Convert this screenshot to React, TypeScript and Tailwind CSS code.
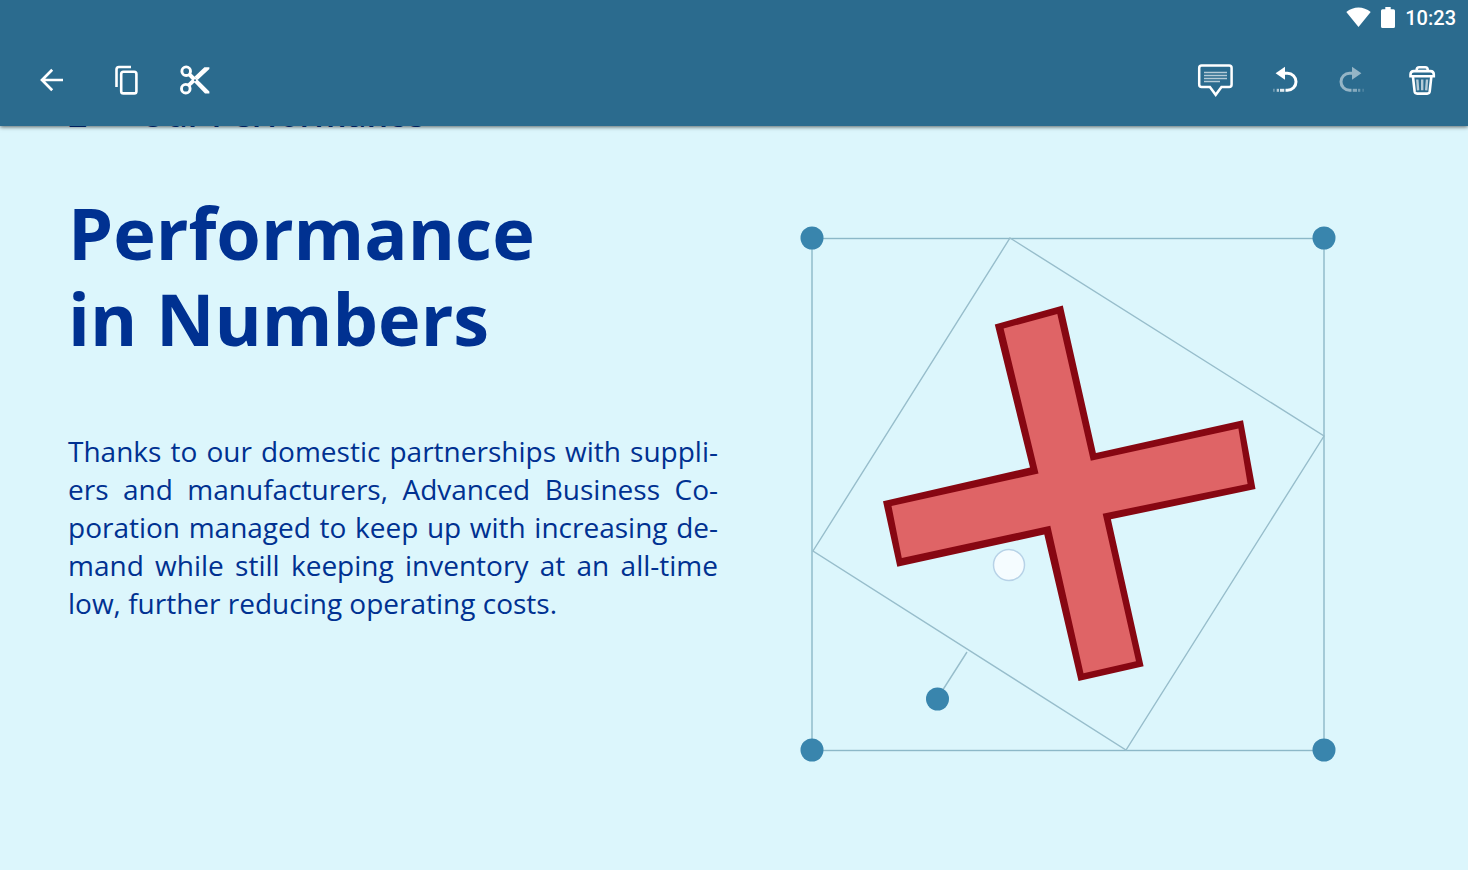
import type { ReactNode } from "react";

function ToolButton({ label, disabled, children }: { label: string; disabled?: boolean; children: ReactNode }) {
  return (
    <button type="button" aria-label={label} disabled={disabled} className="size-9 shrink-0 text-white disabled:opacity-50">
      <svg viewBox="0 0 36 36" className="size-9 overflow-visible" fill="none" stroke="currentColor" strokeWidth="2.9">
        {children}
      </svg>
    </button>
  );
}

function CurvedArrow() {
  return (
    <>
      <path d="M18 11.3h3.500a8.500 8.500 0 0 1 0 17h-2" strokeWidth="3" />
      <path d="M9.600 11.300 19 4.800v13z" fill="currentColor" stroke="none" />
      <path d="M14 28.300h4.300" strokeWidth="3" opacity=".85" />
      <path d="M10.700 28.300H13" strokeWidth="3" opacity=".65" />
      <path d="M7.300 28.300h1.200" strokeWidth="3" opacity=".45" />
    </>
  );
}

function StatusBar() {
  return (
    <div className="flex h-9 items-center justify-end gap-2.5 pr-3 text-white">
      <svg viewBox="0 0 25 20" className="h-5 w-[25px] overflow-visible" fill="currentColor" role="img" aria-label="Wi-Fi">
        <path d="M.3 4C7.500-2 17.500-2 24.700 4L12.500 19z" />
      </svg>
      <svg viewBox="0 0 14 22" className="h-[22px] w-3.5" fill="currentColor" role="img" aria-label="Battery">
        <path d="M4.300 0h5.400v2.300h2.800Q14 2.300 14 3.800v15.700q0 1.500-1.500 1.500h-11Q0 21 0 19.500V3.800q0-1.500 1.500-1.500h2.800z" />
      </svg>
      <time className="font-['Roboto',sans-serif] text-[20px] leading-6 font-medium">10:23</time>
    </div>
  );
}

function Toolbar() {
  return (
    <nav aria-label="Editing" className="flex h-[90px] items-center justify-between pr-7 pb-0.5 pl-[34px]">
      <div className="flex gap-9">
        <ToolButton label="Back">
          <path d="M29 18H9M18.200 7.800 8 18l10.200 10.200" strokeWidth="2.700" />
        </ToolButton>
        <ToolButton label="Copy">
          <path d="M25 5H13q-2.500 0-2.500 2.500v17.500" strokeWidth="2.600" />
          <rect x="15.200" y="9.800" width="15.200" height="21.600" rx="2.200" strokeWidth="2.600" />
        </ToolButton>
        <ToolButton label="Cut">
          <circle cx="8.200" cy="9.200" r="4.300" />
          <circle cx="7.800" cy="26.700" r="4.300" />
          <path d="m10.300 23.600 6-5.600" strokeWidth="3.800" />
          <path d="M10 13.800 12.800 11l18.600 18.600v2h-4.400z" fill="currentColor" stroke="none" />
          <path d="M16.400 14.800 26.400 5.200h5v1.900L19.600 18z" fill="currentColor" stroke="none" />
          <circle cx="17" cy="18.300" r="1" fill="#2b6b8e" stroke="none" />
        </ToolButton>
      </div>
      <div className="flex gap-[33px]">
        <ToolButton label="Comment">
          <path d="M4.700 3.600h27.400q2.500 0 2.500 2.500v16.400q0 2.500-2.500 2.500h-7.600l-5.800 7.800-5.800-7.800H4.700q-2.500 0-2.500-2.500V6.100q0-2.500 2.500-2.500z" strokeWidth="2.500" />
          <path d="M7 10.500h23M7 13.500h23M7 16.500h23M7 19.500h16" strokeWidth="1.300" opacity=".65" />
        </ToolButton>
        <ToolButton label="Undo">
          <CurvedArrow />
        </ToolButton>
        <ToolButton label="Redo" disabled>
          <g transform="translate(36 0) scale(-1 1)">
            <CurvedArrow />
          </g>
        </ToolButton>
        <ToolButton label="Delete">
          <path d="M12.700 8.500V7.800q0-2.500 2.500-2.500h6q2.500 0 2.500 2.500v.7" strokeWidth="2.600" />
          <path d="M6.500 14.200v-1.700q0-3.400 3.400-3.400h16.500q3.400 0 3.400 3.400v1.700z" strokeWidth="2.600" />
          <path d="m8.900 14.200 1.700 15.200q.3 2.200 2.500 2.200h10.100q2.200 0 2.500-2.200l1.700-15.200" strokeWidth="2.600" />
          <path d="m13.300 17.500.8 10.800M18.200 17.500v10.800M23 17.500l-.8 10.800" strokeWidth="2.400" opacity=".65" />
        </ToolButton>
      </div>
    </nav>
  );
}

const handles = [
  [812, 238],
  [1324, 238],
  [812, 750],
  [1324, 750],
  [937.5, 699],
];

function SelectedShape() {
  return (
    <svg viewBox="800 226 536 536" className="w-full" role="img" aria-label="Selected cross shape">
      <g fill="none" stroke="#97bdcb" strokeWidth="1.400">
        <rect x="812" y="238.500" width="512" height="512" stroke="#8cb8c8" />
        <path d="m1010 238 314 198-198 314-313-199zM967 652l-30 47" />
      </g>
      <path
        d="M994.800 324.500 1062.800 305.500 1095.900 453 1243 420.300 1255.500 489 1110.900 519.300 1143.600 666.300 1078.500 681 1044.300 534.500 897.300 566.700 883 501.200 1030 467.500z"
        fill="#870712"
      />
      <path
        d="M1003.600 328.500 1057.300 314 1090.800 460.700 1238.400 428.600 1247.600 484 1102.700 513.700 1136 661.300 1083.500 673.300 1050.300 525.700 901.800 558 891.500 506 1038.500 473.500z"
        fill="#df6466"
      />
      {handles.map(([x, y]) => (
        <circle key={`${x}-${y}`} cx={x} cy={y} r="11.500" fill="#3985ad" />
      ))}
      <circle cx="1009" cy="565" r="15.500" fill="#f5fcff" stroke="#b7d2e7" strokeWidth="1.500" />
    </svg>
  );
}

const justifiedLines = [
  "Thanks to our domestic partnerships with suppli-",
  "ers and manufacturers, Advanced Business Co-",
  "poration managed to keep up with increasing de-",
  "mand while still keeping inventory at an all-time",
];

export default function App() {
  return (
    <div className="min-h-screen bg-[#dcf6fc] font-['Open_Sans',sans-serif] text-[#003191]">
      <header className="relative z-10 bg-[#2b6b8e] shadow-[0_1px_4px_rgba(0,0,0,0.6)]">
        <StatusBar />
        <Toolbar />
      </header>
      <main className="flex items-start gap-[82px] pr-[132px] pl-[68px]">
        <section className="min-w-0 flex-[650]">
          <p className="-mt-8 flex h-10 gap-[52px] text-[34px] leading-10 font-semibold">
            <span>2</span>
            <span>Our Performance</span>
          </p>
          <h1 className="mt-[55px] text-[72px] leading-[86px] font-bold">
            Performance
            <br />
            in Numbers
          </h1>
          <p className="mt-[71px] text-[28px] leading-[38px]">
            {justifiedLines.map((line) => (
              <span key={line} className="block whitespace-nowrap [text-align-last:justify]">
                {line}{" "}
              </span>
            ))}
            <span className="block">low, further reducing operating costs.</span>
          </p>
        </section>
        <div className="min-w-0 flex-[536] pt-[100px]">
          <SelectedShape />
        </div>
      </main>
    </div>
  );
}
